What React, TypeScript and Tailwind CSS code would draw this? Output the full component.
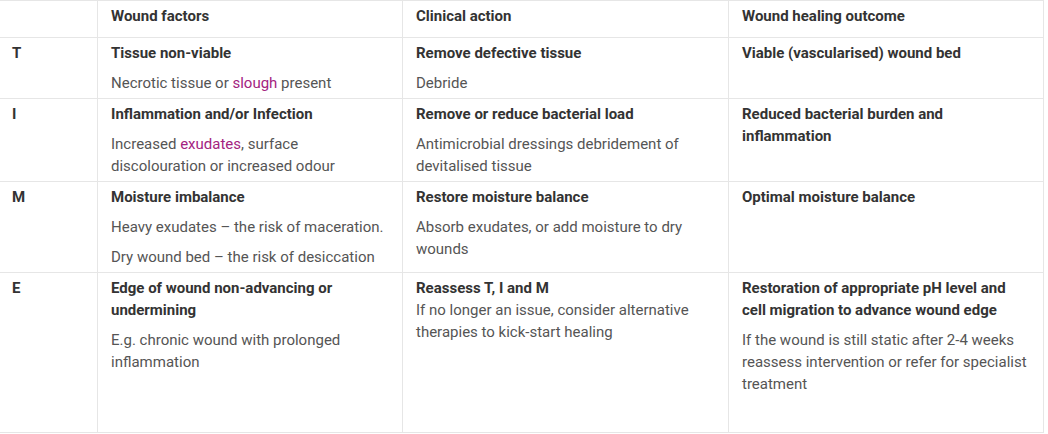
import type { ReactNode } from "react";

const pink = "text-[#a4237f]";

type Row = {
  letter: string;
  factor: ReactNode;
  action: ReactNode;
  outcome: ReactNode;
  last?: boolean;
};

const Title = ({ children }: { children: ReactNode }) => (
  <p className="font-bold text-[#333333]">{children}</p>
);

const Text = ({ children, gap = true }: { children: ReactNode; gap?: boolean }) => (
  <p className={gap ? "mt-2" : ""}>{children}</p>
);

const rows: Row[] = [
  {
    letter: "T",
    factor: (
      <>
        <Title>Tissue non-viable</Title>
        <Text>
          Necrotic tissue or <span className={pink}>slough</span> present
        </Text>
      </>
    ),
    action: (
      <>
        <Title>Remove defective tissue</Title>
        <Text>Debride</Text>
      </>
    ),
    outcome: <Title>Viable (vascularised) wound bed</Title>,
  },
  {
    letter: "I",
    factor: (
      <>
        <Title>Inflammation and/or Infection</Title>
        <Text>
          Increased <span className={pink}>exudates</span>, surface discolouration or
          increased odour
        </Text>
      </>
    ),
    action: (
      <>
        <Title>Remove or reduce bacterial load</Title>
        <Text>Antimicrobial dressings debridement of devitalised tissue</Text>
      </>
    ),
    outcome: <Title>Reduced bacterial burden and inflammation</Title>,
  },
  {
    letter: "M",
    factor: (
      <>
        <Title>Moisture imbalance</Title>
        <Text>Heavy exudates – the risk of maceration.</Text>
        <Text>Dry wound bed – the risk of desiccation</Text>
      </>
    ),
    action: (
      <>
        <Title>Restore moisture balance</Title>
        <Text>Absorb exudates, or add moisture to dry wounds</Text>
      </>
    ),
    outcome: <Title>Optimal moisture balance</Title>,
  },
  {
    letter: "E",
    factor: (
      <>
        <Title>Edge of wound non-advancing or undermining</Title>
        <Text>E.g. chronic wound with prolonged inflammation</Text>
      </>
    ),
    action: (
      <>
        <Title>Reassess T, I and M</Title>
        <Text gap={false}>
          If no longer an issue, consider alternative therapies to kick-start healing
        </Text>
      </>
    ),
    outcome: (
      <>
        <Title>
          Restoration of appropriate pH level and cell migration to advance wound edge
        </Title>
        <Text>
          If the wound is still static after 2-4 weeks reassess intervention or refer for
          specialist treatment
        </Text>
      </>
    ),
    last: true,
  },
];

const cell = "border border-[#e6e6e6] align-top pt-[4px] pb-[4px] px-[13px]";

export default function App() {
  return (
    <div className="w-[1048px] h-[434px] bg-white overflow-hidden">
      <table
        className="table-fixed border-collapse w-[1045px] -ml-px text-[15px] leading-[22px] text-[#555555]"
        style={{ fontFamily: "Roboto, 'Liberation Sans', sans-serif" }}
      >
        <colgroup>
          <col className="w-[98px]" />
          <col className="w-[305px]" />
          <col className="w-[326px]" />
          <col />
        </colgroup>
        <thead>
          <tr className="h-[37px]">
            <th className={`${cell} pl-3`}></th>
            <th className={`${cell} text-left font-bold text-[#333333]`}>Wound factors</th>
            <th className={`${cell} text-left font-bold text-[#333333]`}>Clinical action</th>
            <th className={`${cell} text-left font-bold text-[#333333]`}>Wound healing outcome</th>
          </tr>
        </thead>
        <tbody>
          {rows.map((r) => (
            <tr key={r.letter} className={r.last ? "h-[160px]" : ""}>
              <td className={`${cell} pl-3 font-bold text-[#333333]`}>{r.letter}</td>
              <td className={cell}>{r.factor}</td>
              <td className={cell}>{r.action}</td>
              <td className={cell}>{r.outcome}</td>
            </tr>
          ))}
        </tbody>
      </table>
    </div>
  );
}
